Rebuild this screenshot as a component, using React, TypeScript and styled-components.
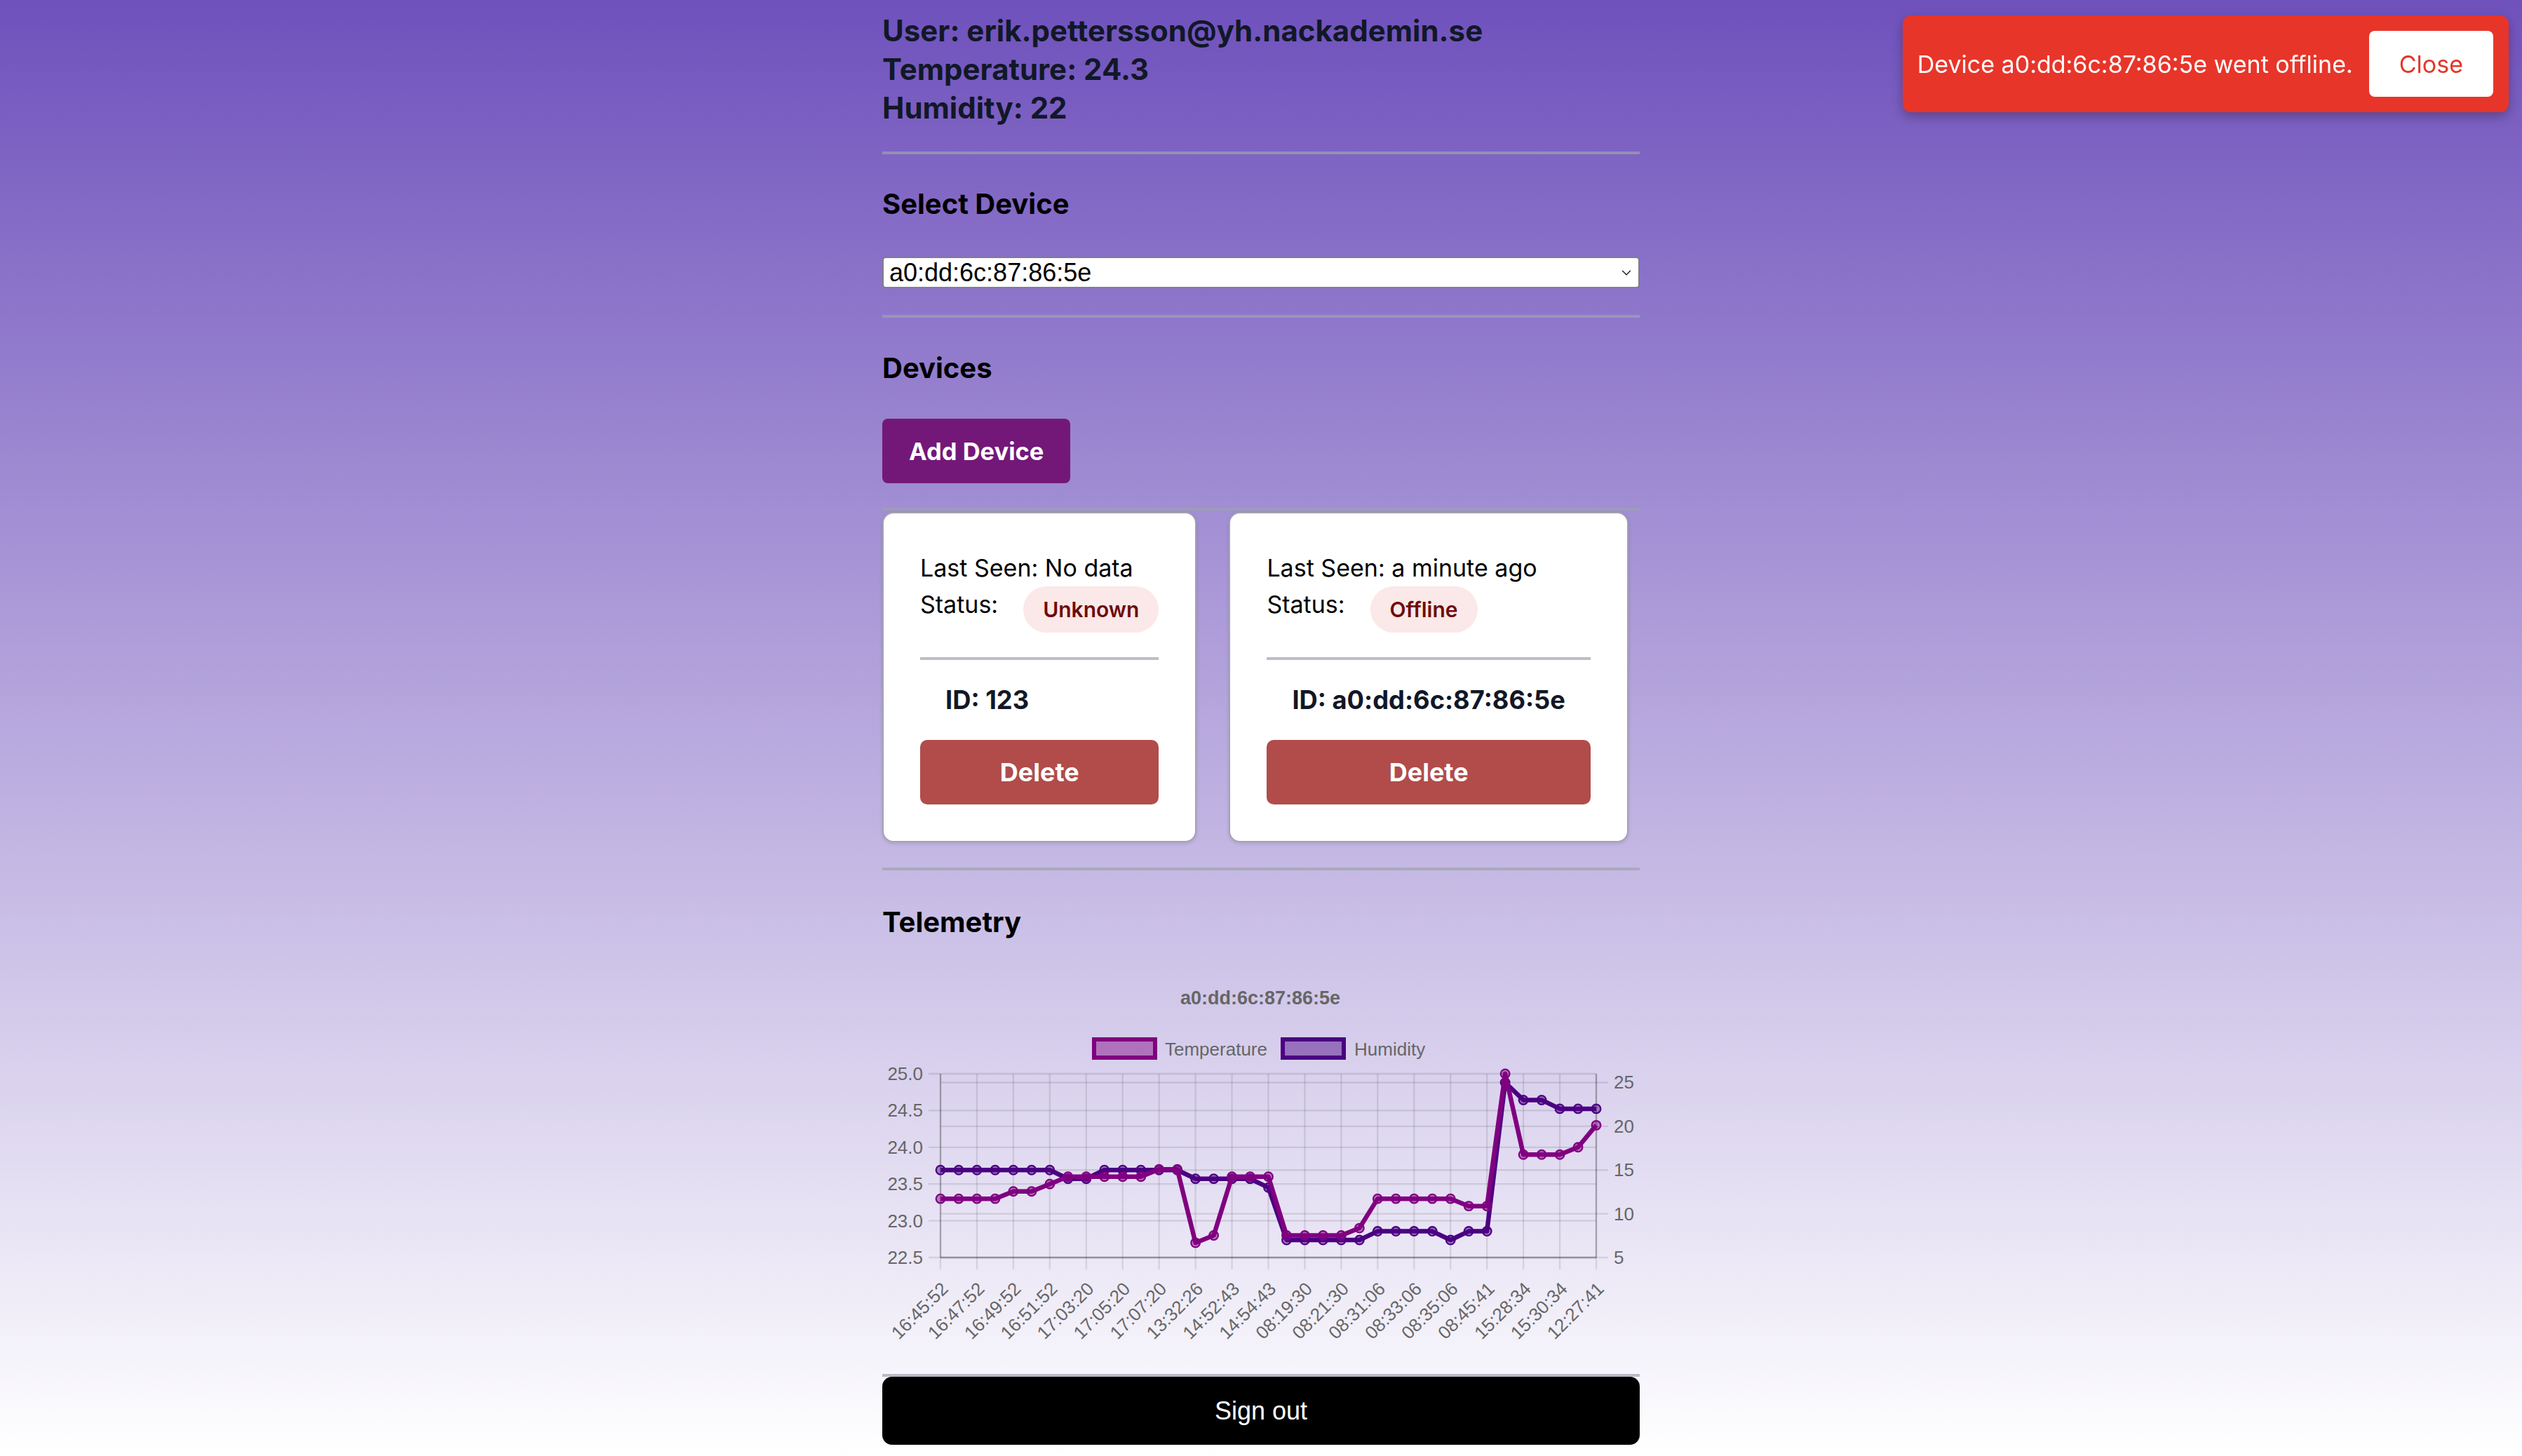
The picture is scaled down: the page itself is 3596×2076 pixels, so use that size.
import React from 'react';
import styled, { createGlobalStyle } from 'styled-components';
import { ChevronDown } from 'lucide-react';

const GlobalStyle = createGlobalStyle`
  html, body { margin: 0; padding: 0; }
  body { font-family: Inter, "Noto Sans", sans-serif; background: #ffffff; }
  * { box-sizing: border-box; }
`;

const Page = styled.div`
  min-height: 2076px;
  background: linear-gradient(to bottom, #6f51bc 0%, #ffffff 100%);
`;

const Container = styled.main`
  width: 1080px;
  margin: 0 auto;
  padding-top: 16px;
  display: flex;
  flex-direction: column;
  align-items: stretch;
`;

const UserInfo = styled.div`
  display: flex;
  flex-direction: column;
`;

const InfoLine = styled.p`
  margin: 0;
  font-size: 42px;
  line-height: 55px;
  font-weight: 700;
  color: #111827;
`;

const Divider = styled.hr<{ $top: number; $bottom: number }>`
  border: none;
  height: 4px;
  background: rgba(156, 163, 175, 0.7);
  margin: ${(p) => p.$top}px 0 ${(p) => p.$bottom}px 0;
  width: 100%;
`;

const SectionTitle = styled.h2`
  margin: 0;
  font-size: 40px;
  line-height: 48px;
  font-weight: 700;
  color: #000000;
`;

const SelectWrap = styled.div`
  position: relative;
  margin-top: 51px;
  height: 45px;
`;

const DeviceSelect = styled.select`
  width: 100%;
  height: 45px;
  appearance: none;
  -webkit-appearance: none;
  background: #ffffff;
  border: 2px solid #7f7d88;
  border-radius: 5px;
  padding: 0 44px 0 8px;
  font-family: "Liberation Sans", Arial, sans-serif;
  font-size: 36px;
  color: #000000;
`;

const SelectChevron = styled.span`
  position: absolute;
  right: 8px;
  top: 50%;
  transform: translateY(-50%);
  display: flex;
  color: #222222;
  pointer-events: none;
`;

const AddButton = styled.button`
  margin-top: 48px;
  align-self: flex-start;
  height: 92px;
  padding: 0 38px;
  background: #731879;
  color: #ffffff;
  border: none;
  border-radius: 8px;
  font-family: Inter, sans-serif;
  font-size: 34.5px;
  font-weight: 700;
`;

const CardsRow = styled.div`
  display: flex;
  gap: 46px;
  align-items: stretch;
`;

const Card = styled.div`
  flex: 0 0 auto;
  display: flex;
  flex-direction: column;
  align-items: stretch;
  background: #ffffff;
  border: 2px solid #a4a3b2;
  border-radius: 16px;
  padding: 52px;
  box-shadow: 0 2px 5px rgba(0, 0, 0, 0.12);
`;

const CardText = styled.p`
  margin: 0;
  font-size: 34px;
  line-height: 52px;
  color: #000000;
  white-space: nowrap;
`;

const StatusRow = styled.div`
  display: flex;
  align-items: flex-start;
  gap: 36px;
`;

const Badge = styled.span`
  display: inline-block;
  height: 66px;
  line-height: 66px;
  padding: 0 28px;
  border-radius: 33px;
  background: #fbe8e8;
  color: #6e0c0c;
  font-size: 30px;
  font-weight: 600;
  white-space: nowrap;
`;

const CardDivider = styled.div`
  height: 4px;
  margin-top: 35px;
  background: rgba(156, 163, 175, 0.7);
`;

const DeviceId = styled.p`
  margin: 34px 0 0 0;
  padding: 0 36px;
  font-size: 36.3px;
  line-height: 46px;
  font-weight: 700;
  color: #111827;
  white-space: nowrap;
`;

const DeleteButton = styled.button`
  margin-top: 34px;
  height: 92px;
  background: #b14c4a;
  color: #ffffff;
  border: none;
  border-radius: 10px;
  font-family: Inter, sans-serif;
  font-size: 36px;
  font-weight: 700;
`;

const ChartWrap = styled.div`
  margin-top: 46px;
  height: 560px;
  display: flex;
`;

const ChartSvg = styled.svg`
  display: block;
  text {
    font-family: "Liberation Sans", Arial, Helvetica, sans-serif;
    fill: #666666;
  }
`;

const SignOutButton = styled.button`
  height: 97px;
  width: 100%;
  background: #000000;
  color: #ffffff;
  border: none;
  border-radius: 14px;
  font-family: "Liberation Sans", Arial, sans-serif;
  font-size: 36px;
`;

const Toast = styled.div`
  position: fixed;
  top: 22px;
  right: 19px;
  display: flex;
  align-items: center;
  gap: 23px;
  padding: 22px 22px 22px 21px;
  background: #e8352a;
  border-radius: 12px;
  box-shadow: 0 6px 16px rgba(0, 0, 0, 0.28);
`;

const ToastText = styled.span`
  color: #ffffff;
  font-size: 34px;
  white-space: nowrap;
`;

const CloseButton = styled.button`
  height: 94px;
  padding: 0 43px;
  background: #ffffff;
  color: #e2372b;
  border: none;
  border-radius: 8px;
  font-family: Inter, sans-serif;
  font-size: 34px;
`;

const temps = [
  23.3, 23.3, 23.3, 23.3, 23.4, 23.4, 23.5, 23.6, 23.6, 23.6, 23.6, 23.6, 23.7, 23.7, 22.7, 22.8,
  23.6, 23.6, 23.6, 22.8, 22.8, 22.8, 22.8, 22.9, 23.3, 23.3, 23.3, 23.3, 23.3, 23.2, 23.2, 25.0,
  23.9, 23.9, 23.9, 24.0, 24.3,
];
const hums = [
  15, 15, 15, 15, 15, 15, 15, 14, 14, 15, 15, 15, 15, 15, 14, 14, 14, 14, 13, 7, 7, 7, 7, 7, 8, 8, 8,
  8, 7, 8, 8, 25, 23, 23, 22, 22, 22,
];
const xLabels = [
  '16:45:52', '16:47:52', '16:49:52', '16:51:52', '17:03:20', '17:05:20', '17:07:20', '13:32:26',
  '14:52:43', '14:54:43', '08:19:30', '08:21:30', '08:31:06', '08:33:06', '08:35:06', '08:45:41',
  '15:28:34', '15:30:34', '12:27:41',
];

const W = 1080;
const H = 560;
const L = 83;
const R = 1018;
const T = 146;
const B = 408;
const N = temps.length;
const DX = (R - L) / (N - 1);
const yT = (v: number) => B - ((v - 22.5) / 2.5) * (B - T);
const yH = (v: number) => B - ((v - 5) / 21) * (B - T);
const xi = (i: number) => L + i * DX;

const TEMP_COLOR = 'rgb(128, 0, 128)';
const TEMP_FILL = 'rgba(128, 0, 128, 0.45)';
const HUM_COLOR = 'rgb(75, 0, 130)';
const HUM_FILL = 'rgba(75, 0, 130, 0.45)';
const GRID = 'rgba(0, 0, 0, 0.1)';
const BORDER = 'rgba(0, 0, 0, 0.22)';

function TelemetryChart() {
  const leftTicks = [25.0, 24.5, 24.0, 23.5, 23.0, 22.5];
  const rightTicks = [25, 20, 15, 10, 5];
  const tempPts = temps.map((v, i) => `${xi(i)},${yT(v)}`).join(' ');
  const humPts = hums.map((v, i) => `${xi(i)},${yH(v)}`).join(' ');
  return (
    <ChartSvg width={W} height={H} viewBox={`0 0 ${W} ${H}`}>
      <text x={539} y={38} fontSize={27} fontWeight={700} textAnchor="middle" dominantBaseline="central">
        a0:dd:6c:87:86:5e
      </text>
      <rect x={302} y={97} width={87} height={26} fill={TEMP_FILL} stroke={TEMP_COLOR} strokeWidth={6} />
      <text x={403} y={111} fontSize={26} dominantBaseline="central">Temperature</text>
      <rect x={571} y={97} width={87} height={26} fill={HUM_FILL} stroke={HUM_COLOR} strokeWidth={6} />
      <text x={673} y={111} fontSize={26} dominantBaseline="central">Humidity</text>

      {xLabels.map((_, k) => (
        <line key={`vg${k}`} x1={xi(k * 2)} x2={xi(k * 2)} y1={T} y2={B + 17} stroke={GRID} strokeWidth={2.3} />
      ))}
      {leftTicks.map((v) => (
        <line key={`lg${v}`} x1={L - 17} x2={R} y1={yT(v)} y2={yT(v)} stroke={GRID} strokeWidth={2.3} />
      ))}
      {rightTicks.map((v) => (
        <line key={`rg${v}`} x1={L} x2={R + 17} y1={yH(v)} y2={yH(v)} stroke={GRID} strokeWidth={2.3} />
      ))}
      <line x1={L} x2={L} y1={T} y2={B} stroke={BORDER} strokeWidth={2.3} />
      <line x1={R} x2={R} y1={T} y2={B} stroke={BORDER} strokeWidth={2.3} />
      <line x1={L} x2={R} y1={B} y2={B} stroke={BORDER} strokeWidth={2.3} />

      {leftTicks.map((v) => (
        <text key={`lt${v}`} x={58} y={yT(v)} fontSize={26} textAnchor="end" dominantBaseline="central">
          {v.toFixed(1)}
        </text>
      ))}
      {rightTicks.map((v) => (
        <text key={`rt${v}`} x={1043} y={yH(v)} fontSize={26} dominantBaseline="central">
          {v}
        </text>
      ))}
      {xLabels.map((lab, k) => {
        const px = xi(k * 2) + 6;
        const py = B + 40;
        return (
          <text
            key={`xl${k}`}
            x={px}
            y={py}
            fontSize={26}
            textAnchor="end"
            dominantBaseline="central"
            transform={`rotate(-45 ${px} ${py})`}
          >
            {lab}
          </text>
        );
      })}

      <polyline points={humPts} fill="none" stroke={HUM_COLOR} strokeWidth={6.5} strokeLinejoin="round" />
      {hums.map((v, i) => (
        <circle key={`hp${i}`} cx={xi(i)} cy={yH(v)} r={6.3} fill={HUM_FILL} stroke={HUM_COLOR} strokeWidth={2.3} />
      ))}
      <polyline points={tempPts} fill="none" stroke={TEMP_COLOR} strokeWidth={6.5} strokeLinejoin="round" />
      {temps.map((v, i) => (
        <circle key={`tp${i}`} cx={xi(i)} cy={yT(v)} r={6.3} fill={TEMP_FILL} stroke={TEMP_COLOR} strokeWidth={2.3} />
      ))}
    </ChartSvg>
  );
}

type Device = { id: string; lastSeen: string; status: string };

const devices: Device[] = [
  { id: '123', lastSeen: 'No data', status: 'Unknown' },
  { id: 'a0:dd:6c:87:86:5e', lastSeen: 'a minute ago', status: 'Offline' },
];

function DeviceCard({ device }: { device: Device }) {
  return (
    <Card>
      <CardText>Last Seen: {device.lastSeen}</CardText>
      <StatusRow>
        <CardText>Status:</CardText>
        <Badge>{device.status}</Badge>
      </StatusRow>
      <CardDivider />
      <DeviceId>ID: {device.id}</DeviceId>
      <DeleteButton>Delete</DeleteButton>
    </Card>
  );
}

export default function App() {
  return (
    <>
      <GlobalStyle />
      <Page>
        <Container>
          <UserInfo>
            <InfoLine>User: erik.pettersson@yh.nackademin.se</InfoLine>
            <InfoLine>Temperature: 24.3</InfoLine>
            <InfoLine>Humidity: 22</InfoLine>
          </UserInfo>
          <Divider $top={35} $bottom={47} />
          <SectionTitle>Select Device</SectionTitle>
          <SelectWrap>
            <DeviceSelect defaultValue="a0:dd:6c:87:86:5e">
              <option value="123">123</option>
              <option value="a0:dd:6c:87:86:5e">a0:dd:6c:87:86:5e</option>
            </DeviceSelect>
            <SelectChevron>
              <ChevronDown size={22} strokeWidth={1.6} />
            </SelectChevron>
          </SelectWrap>
          <Divider $top={38} $bottom={48} />
          <SectionTitle>Devices</SectionTitle>
          <AddButton>Add Device</AddButton>
          <Divider $top={35} $bottom={2} />
          <CardsRow>
            {devices.map((d) => (
              <DeviceCard key={d.id} device={d} />
            ))}
          </CardsRow>
          <Divider $top={36} $bottom={50} />
          <SectionTitle>Telemetry</SectionTitle>
          <ChartWrap>
            <TelemetryChart />
          </ChartWrap>
          <Divider $top={14} $bottom={0} />
          <SignOutButton>Sign out</SignOutButton>
        </Container>
        <Toast>
          <ToastText>Device a0:dd:6c:87:86:5e went offline.</ToastText>
          <CloseButton>Close</CloseButton>
        </Toast>
      </Page>
    </>
  );
}
